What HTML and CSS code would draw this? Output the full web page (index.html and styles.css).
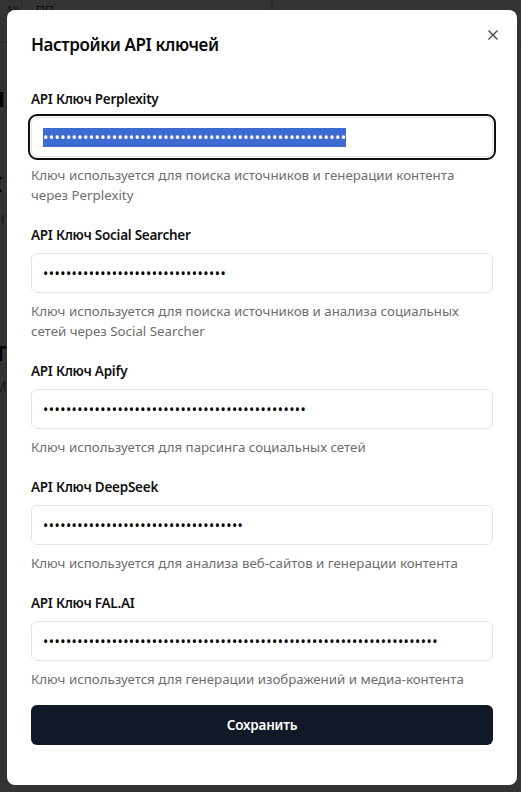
FILE: index.html
```html
<!DOCTYPE html>
<html lang="ru">
<head>
<meta charset="utf-8">
<title>Настройки API ключей</title>
<link rel="stylesheet" href="styles.css">
</head>
<body>
<div class="app">
  <header class="app-header">
    <div class="cell cell-num">1ﾘ</div>
    <div class="cell cell-wide"><span class="sq"></span><span class="sq"></span><span class="chev">⌄</span></div>
    <div class="cell"></div>
  </header>
  <main class="app-main">
    <div class="bg-row bg-h">1</div>
    <div class="bg-row bg-h2">I</div>
    <div class="bg-row bg-t">зı</div>
    <div class="bg-row bg-h3">T</div>
    <div class="bg-row bg-t">M</div>
  </main>
</div>
<div class="overlay"></div>
<div class="dialog" role="dialog">
  <button class="close" aria-label="Закрыть">
    <svg width="12" height="12" viewBox="0 0 12 12"><path d="M1.5 1.5L10.5 10.5M10.5 1.5L1.5 10.5" stroke="#444" stroke-width="1.3" fill="none"/></svg>
  </button>
  <h2 class="title">Настройки API ключей</h2>
  <form class="form">
    <div class="field">
      <label class="label">API Ключ Perplexity</label>
      <input id="first" class="input focused" type="password" value="pplx-abcdefghijklmnopqrstuvwxyz0123456789abcdefghijkl">
      <p class="help">Ключ используется для поиска источников и генерации контента через Perplexity</p>
    </div>
    <div class="field">
      <label class="label">API Ключ Social Searcher</label>
      <input class="input" type="password" value="abcdefghijklmnopqrstuvwxyz012345">
      <p class="help">Ключ используется для поиска источников и анализа социальных сетей через Social Searcher</p>
    </div>
    <div class="field">
      <label class="label">API Ключ Apify</label>
      <input class="input" type="password" value="apify_api_abcdefghijklmnopqrstuvwxyz0123456789">
      <p class="help">Ключ используется для парсинга социальных сетей</p>
    </div>
    <div class="field">
      <label class="label">API Ключ DeepSeek</label>
      <input class="input" type="password" value="sk-abcdefghijklmnopqrstuvwxyz012345">
      <p class="help">Ключ используется для анализа веб-сайтов и генерации контента</p>
    </div>
    <div class="field">
      <label class="label">API Ключ FAL.AI</label>
      <input class="input" type="password" value="abcdefgh-ijkl-mnop-qrst-uvwxyz012345:abcdefghijklmnopqrstuvwxyz012345">
      <p class="help">Ключ используется для генерации изображений и медиа-контента</p>
    </div>
    <button type="button" class="save">Сохранить</button>
  </form>
</div>
<script src="script.js"></script>
</body>
</html>
```

FILE: styles.css
```css
* { box-sizing: border-box; }
html, body { margin: 0; padding: 0; }
body {
  width: 521px;
  height: 792px;
  overflow: hidden;
  background: #ffffff;
  font-family: "Noto Sans", "Open Sans", sans-serif;
  position: relative;
}
.app { color: #111; }
.app-header {
  height: 43px;
  display: flex;
  border-bottom: 1px solid #cfcfcf;
}
.cell {
  border-right: 1px solid #cfcfcf;
  display: flex;
  align-items: flex-start;
  padding-top: 2px;
  font-size: 12px;
  color: #555;
}
.cell-num { width: 22px; justify-content: flex-end; padding-right: 2px; }
.cell-wide { width: 250px; gap: 2px; padding-left: 15px; }
.sq { width: 7px; height: 8px; border: 1px solid #444; margin-top: 4px; }
.chev { margin-left: auto; margin-right: 20px; }
.app-main { padding-left: 0; margin-left: -6px; }
.bg-row { font-size: 22px; font-weight: 700; }
.bg-h { margin-top: 40px; }
.bg-h2 { margin-top: 55px; }
.bg-t { font-size: 14px; font-weight: 400; color: #777; margin-top: 10px; }
.bg-h3 { margin-top: 110px; }

.overlay {
  position: absolute;
  inset: 0;
  background: rgba(0, 0, 0, 0.8);
}
.dialog {
  position: absolute;
  left: 7px;
  top: 10px;
  width: 510px;
  height: 775px;
  background: #fff;
  border-radius: 8px;
  padding: 21px 24px 24px;
}
.close {
  position: absolute;
  right: 18px;
  top: 19px;
  border: 0;
  background: none;
  padding: 0;
  width: 12px;
  height: 12px;
  display: flex;
}
.title {
  margin: 0;
  font-size: 17px;
  line-height: 28px;
  font-weight: 600;
  color: #0a0a0a;
  letter-spacing: -0.4px;
}
.form {
  margin-top: 30px;
  display: flex;
  flex-direction: column;
}
.field {
  display: flex;
  flex-direction: column;
  margin-bottom: 20px;
}
.field:last-of-type { margin-bottom: 16px; }
.label {
  font-size: 13.5px;
  line-height: 20px;
  font-weight: 600;
  color: #111;
  letter-spacing: -0.25px;
}
.input {
  margin-top: 8px;
  height: 40px;
  width: 100%;
  border: 1px solid #e4e4e7;
  border-radius: 6px;
  padding: 0 11px;
  font-family: "Noto Sans", sans-serif;
  font-size: 14px;
  color: #000;
  background: #fff;
  letter-spacing: 0.46px;
  outline: none;
}
.input.focused {
  outline: 2px solid #101010;
  outline-offset: 1px;
}
.input::selection { background: #3e6bd2; color: #fff; }
.help {
  margin: 8px 0 0;
  font-size: 13.3px;
  line-height: 20px;
  color: #6e6e6e;
}
.save {
  height: 40px;
  width: 100%;
  border: 0;
  border-radius: 6px;
  background: #111827;
  color: #fff;
  font-family: "Noto Sans", sans-serif;
  font-size: 13.5px;
  font-weight: 600;
  letter-spacing: -0.2px;
}
```

FILE: script.js
```js
var el = document.getElementById('first');
el.focus();
el.select();
```
